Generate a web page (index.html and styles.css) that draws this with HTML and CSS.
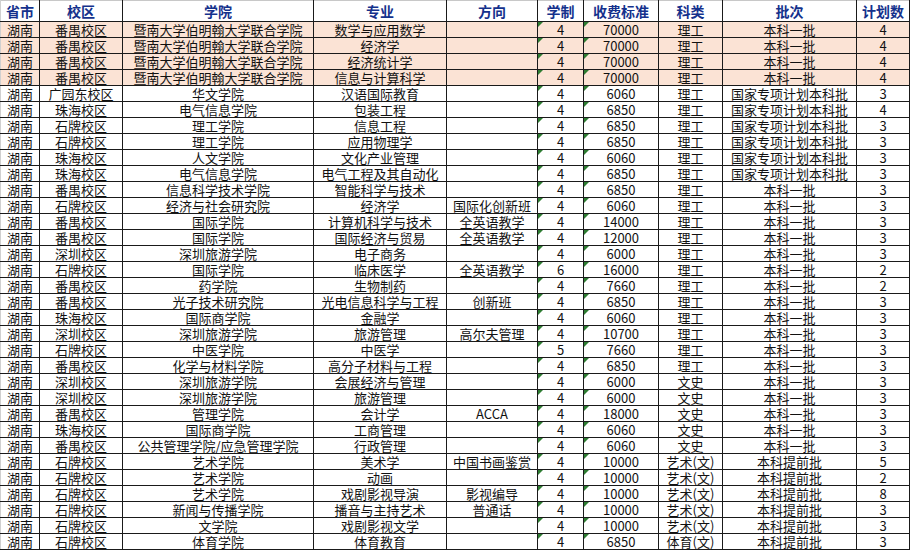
FILE: index.html
```html
<!DOCTYPE html>
<html lang="zh">
<head>
<meta charset="utf-8">
<title>招生计划</title>
<link rel="stylesheet" href="styles.css">
</head>
<body>
<table class="sheet">
<colgroup>
<col class="c1"><col class="c2"><col class="c3"><col class="c4"><col class="c5"><col class="c6"><col class="c7"><col class="c8"><col class="c9"><col class="c10">
</colgroup>
<thead>
<tr><th>省市</th><th>校区</th><th>学院</th><th>专业</th><th>方向</th><th>学制</th><th>收费标准</th><th>科类</th><th>批次</th><th>计划数</th></tr>
</thead>
<tbody>
<tr class="hl"><td>湖南</td><td>番禺校区</td><td>暨南大学伯明翰大学联合学院</td><td>数学与应用数学</td><td></td><td class="n">4</td><td class="n">70000</td><td>理工</td><td>本科一批</td><td>4</td></tr>
<tr class="hl"><td>湖南</td><td>番禺校区</td><td>暨南大学伯明翰大学联合学院</td><td>经济学</td><td></td><td class="n">4</td><td class="n">70000</td><td>理工</td><td>本科一批</td><td>4</td></tr>
<tr class="hl"><td>湖南</td><td>番禺校区</td><td>暨南大学伯明翰大学联合学院</td><td>经济统计学</td><td></td><td class="n">4</td><td class="n">70000</td><td>理工</td><td>本科一批</td><td>4</td></tr>
<tr class="hl"><td>湖南</td><td>番禺校区</td><td>暨南大学伯明翰大学联合学院</td><td>信息与计算科学</td><td></td><td class="n">4</td><td class="n">70000</td><td>理工</td><td>本科一批</td><td>4</td></tr>
<tr><td>湖南</td><td>广园东校区</td><td>华文学院</td><td>汉语国际教育</td><td></td><td class="n">4</td><td class="n">6060</td><td>理工</td><td>国家专项计划本科批</td><td>3</td></tr>
<tr><td>湖南</td><td>珠海校区</td><td>电气信息学院</td><td>包装工程</td><td></td><td class="n">4</td><td class="n">6850</td><td>理工</td><td>国家专项计划本科批</td><td>4</td></tr>
<tr><td>湖南</td><td>石牌校区</td><td>理工学院</td><td>信息工程</td><td></td><td class="n">4</td><td class="n">6850</td><td>理工</td><td>国家专项计划本科批</td><td>3</td></tr>
<tr><td>湖南</td><td>石牌校区</td><td>理工学院</td><td>应用物理学</td><td></td><td class="n">4</td><td class="n">6850</td><td>理工</td><td>国家专项计划本科批</td><td>3</td></tr>
<tr><td>湖南</td><td>珠海校区</td><td>人文学院</td><td>文化产业管理</td><td></td><td class="n">4</td><td class="n">6060</td><td>理工</td><td>国家专项计划本科批</td><td>3</td></tr>
<tr><td>湖南</td><td>珠海校区</td><td>电气信息学院</td><td>电气工程及其自动化</td><td></td><td class="n">4</td><td class="n">6850</td><td>理工</td><td>国家专项计划本科批</td><td>3</td></tr>
<tr><td>湖南</td><td>番禺校区</td><td>信息科学技术学院</td><td>智能科学与技术</td><td></td><td class="n">4</td><td class="n">6850</td><td>理工</td><td>本科一批</td><td>3</td></tr>
<tr><td>湖南</td><td>石牌校区</td><td>经济与社会研究院</td><td>经济学</td><td>国际化创新班</td><td class="n">4</td><td class="n">6060</td><td>理工</td><td>本科一批</td><td>3</td></tr>
<tr><td>湖南</td><td>番禺校区</td><td>国际学院</td><td>计算机科学与技术</td><td>全英语教学</td><td class="n">4</td><td class="n">14000</td><td>理工</td><td>本科一批</td><td>3</td></tr>
<tr><td>湖南</td><td>番禺校区</td><td>国际学院</td><td>国际经济与贸易</td><td>全英语教学</td><td class="n">4</td><td class="n">12000</td><td>理工</td><td>本科一批</td><td>3</td></tr>
<tr><td>湖南</td><td>深圳校区</td><td>深圳旅游学院</td><td>电子商务</td><td></td><td class="n">4</td><td class="n">6000</td><td>理工</td><td>本科一批</td><td>3</td></tr>
<tr><td>湖南</td><td>石牌校区</td><td>国际学院</td><td>临床医学</td><td>全英语教学</td><td class="n">6</td><td class="n">16000</td><td>理工</td><td>本科一批</td><td>2</td></tr>
<tr><td>湖南</td><td>番禺校区</td><td>药学院</td><td>生物制药</td><td></td><td class="n">4</td><td class="n">7660</td><td>理工</td><td>本科一批</td><td>2</td></tr>
<tr><td>湖南</td><td>番禺校区</td><td>光子技术研究院</td><td>光电信息科学与工程</td><td>创新班</td><td class="n">4</td><td class="n">6850</td><td>理工</td><td>本科一批</td><td>3</td></tr>
<tr><td>湖南</td><td>珠海校区</td><td>国际商学院</td><td>金融学</td><td></td><td class="n">4</td><td class="n">6060</td><td>理工</td><td>本科一批</td><td>3</td></tr>
<tr><td>湖南</td><td>深圳校区</td><td>深圳旅游学院</td><td>旅游管理</td><td>高尔夫管理</td><td class="n">4</td><td class="n">10700</td><td>理工</td><td>本科一批</td><td>3</td></tr>
<tr><td>湖南</td><td>石牌校区</td><td>中医学院</td><td>中医学</td><td></td><td class="n">5</td><td class="n">7660</td><td>理工</td><td>本科一批</td><td>3</td></tr>
<tr><td>湖南</td><td>番禺校区</td><td>化学与材料学院</td><td>高分子材料与工程</td><td></td><td class="n">4</td><td class="n">6850</td><td>理工</td><td>本科一批</td><td>3</td></tr>
<tr><td>湖南</td><td>深圳校区</td><td>深圳旅游学院</td><td>会展经济与管理</td><td></td><td class="n">4</td><td class="n">6000</td><td>文史</td><td>本科一批</td><td>3</td></tr>
<tr><td>湖南</td><td>深圳校区</td><td>深圳旅游学院</td><td>旅游管理</td><td></td><td class="n">4</td><td class="n">6000</td><td>文史</td><td>本科一批</td><td>3</td></tr>
<tr><td>湖南</td><td>番禺校区</td><td>管理学院</td><td>会计学</td><td>ACCA</td><td class="n">4</td><td class="n">18000</td><td>文史</td><td>本科一批</td><td>3</td></tr>
<tr><td>湖南</td><td>珠海校区</td><td>国际商学院</td><td>工商管理</td><td></td><td class="n">4</td><td class="n">6060</td><td>文史</td><td>本科一批</td><td>3</td></tr>
<tr><td>湖南</td><td>番禺校区</td><td>公共管理学院/应急管理学院</td><td>行政管理</td><td></td><td class="n">4</td><td class="n">6060</td><td>文史</td><td>本科一批</td><td>3</td></tr>
<tr><td>湖南</td><td>石牌校区</td><td>艺术学院</td><td>美术学</td><td>中国书画鉴赏</td><td class="n">4</td><td class="n">10000</td><td>艺术(文)</td><td>本科提前批</td><td>5</td></tr>
<tr><td>湖南</td><td>石牌校区</td><td>艺术学院</td><td>动画</td><td></td><td class="n">4</td><td class="n">10000</td><td>艺术(文)</td><td>本科提前批</td><td>2</td></tr>
<tr><td>湖南</td><td>石牌校区</td><td>艺术学院</td><td>戏剧影视导演</td><td>影视编导</td><td class="n">4</td><td class="n">10000</td><td>艺术(文)</td><td>本科提前批</td><td>8</td></tr>
<tr><td>湖南</td><td>石牌校区</td><td>新闻与传播学院</td><td>播音与主持艺术</td><td>普通话</td><td class="n">4</td><td class="n">10000</td><td>艺术(文)</td><td>本科提前批</td><td>3</td></tr>
<tr><td>湖南</td><td>石牌校区</td><td>文学院</td><td>戏剧影视文学</td><td></td><td class="n">4</td><td class="n">10000</td><td>艺术(文)</td><td>本科提前批</td><td>3</td></tr>
<tr><td>湖南</td><td>石牌校区</td><td>体育学院</td><td>体育教育</td><td></td><td class="n">4</td><td class="n">6850</td><td>体育(文)</td><td>本科提前批</td><td>3</td></tr>
</tbody>
</table>
</body>
</html>
```

FILE: styles.css
```css
html, body {
  margin: 0;
  padding: 0;
  background: #ffffff;
}

.sheet {
  border-collapse: collapse;
  table-layout: fixed;
  width: 909px;
  font-family: "Noto Sans CJK SC", "Noto Sans", sans-serif;
  font-size: 13px;
  color: #111;
  border-top: 1px solid #c8c8c8;
}

.c1 { width: 39px; }
.c2 { width: 83px; }
.c3 { width: 191px; }
.c4 { width: 133px; }
.c5 { width: 91px; }
.c6 { width: 46px; }
.c7 { width: 75px; }
.c8 { width: 64px; }
.c9 { width: 134px; }
.c10 { width: 53px; }

.sheet th,
.sheet td {
  border: 1px solid #1a1a1a;
  padding: 0;
  text-align: center;
  white-space: nowrap;
  line-height: 15px;
}

.sheet th {
  height: 20px;
  font-weight: 700;
  color: #14318c;
  font-size: 14px;
  border-top: none;
}

.sheet th:first-child,
.sheet td:first-child {
  border-left: 1px solid #d0d0d0;
}

.sheet td {
  height: 15px;
}

.sheet tr.hl td {
  background: #fbe3d5;
}

.sheet td.n {
  position: relative;
}

.sheet td.n::before {
  content: "";
  position: absolute;
  left: 0;
  top: 0;
  width: 0;
  height: 0;
  border-top: 5px solid #2e7d32;
  border-right: 5px solid transparent;
}
```
